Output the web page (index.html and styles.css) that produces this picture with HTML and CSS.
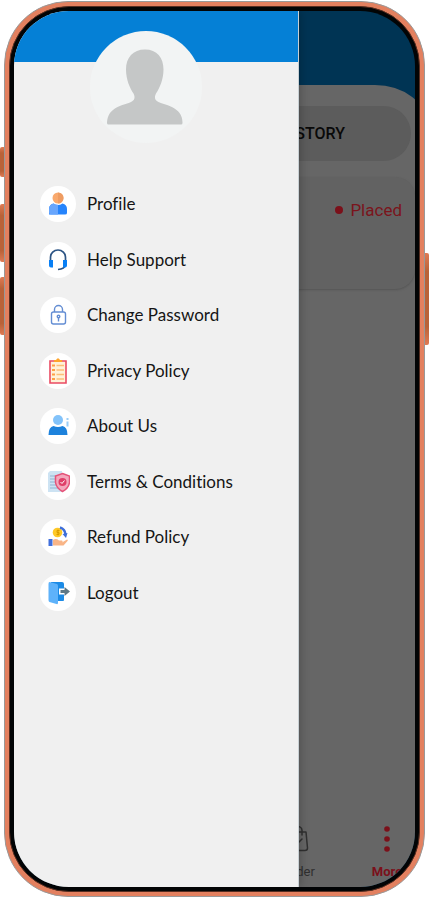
FILE: index.html
```html
<!DOCTYPE html>
<html lang="en">
<head>
<meta charset="utf-8">
<meta name="viewport" content="width=device-width, initial-scale=1">
<title>Account menu</title>
<link rel="stylesheet" href="styles.css">
</head>
<body>
<div class="phone">
  <span class="key key-mute"></span>
  <span class="key key-up"></span>
  <span class="key key-down"></span>
  <span class="key key-power"></span>
  <div class="bezel">
    <div class="screen">
      <main class="app">
        <header class="app-header"></header>
        <section class="sheet">
          <button class="history" type="button">HISTORY</button>
          <article class="order"><span class="dot"></span>Placed</article>
        </section>
        <nav class="tabs">
          <a class="tab" href="#order">
            <svg width="22" height="28" viewBox="0 0 22 28" fill="none" stroke="currentColor" stroke-width="1.5" stroke-linecap="round" stroke-linejoin="round"><path d="M3 7H18L19.500 23Q19.500 25.500 17 25.500H3Q.8 25.500 1 23L2 8Q2 7 3 7ZM5 10V5.500a4.500 4 0 0 1 9 0V10M6 16l3 3 5-5"/></svg>
            Order
          </a>
          <a class="tab tab-active" href="#more">
            <svg width="22" height="28" viewBox="0 0 22 28" fill="currentColor"><circle cx="11" cy="4" r="2.800"/><circle cx="11" cy="14" r="2.800"/><circle cx="11" cy="24" r="2.800"/></svg>
            More
          </a>
        </nav>
      </main>
      <aside class="drawer">
        <div class="banner"></div>
        <svg class="avatar" viewBox="0 0 112 112" role="img" aria-label="Profile picture"><circle cx="56" cy="56" r="56" fill="#f2f4f4"/><path fill="#c5c7c7" d="M55 18.500c12 0 18.500 8 18.500 20 0 10-4 19-7.500 24-2 4-1 7 2.500 8.500 6 2.500 13 3.500 18 8 4.500 3.500 6 8 6 13q0 1.500-1.500 1.500H18.500q-1.500 0-1.500-1.500c0-5 2-10 6-13 5-4.500 12-5.500 18-8 3.500-1.500 4.500-4.500 2.500-8.500-3.500-5-7.500-14-7.500-24 0-12 7-20 19-20Z"/></svg>
        <nav class="menu">
          <a class="item" href="#profile"><span class="icon"><svg viewBox="0 0 24 24"><circle cx="12" cy="6" r="5.500" fill="#f9a96d"/><path d="M12 .5a5.500 5.500 0 0 1 0 11Z" fill="#ee9c62"/><path d="M3 22.500V17q0-4.500 4.500-5.500 4.500 3 9 0Q21 12.500 21 17v4q0 1.500-2 1.500Z" fill="#2684fc"/><path d="M12 12.800v9.700H5q-2 0-2-2V17q0-4.500 4.500-5.500 2 1.300 4.500 1.300Z" fill="#68a6fd"/></svg></span>Profile</a>
          <a class="item" href="#support"><span class="icon"><svg viewBox="0 0 24 24" fill="none"><path d="M4.500 12V9.500a7.500 7.500 0 0 1 15 0V12" stroke="#2c5484" stroke-width="1.700"/><path d="M19.500 17q-1 4-7.500 4.500" stroke="#2c5484" stroke-width="1.700"/><path d="M3 12h4v7.500H5q-2 0-2-2ZM21 12h-4v7.500H19q2 0 2-2Z" fill="#087ff5"/></svg></span>Help Support</a>
          <a class="item" href="#password"><span class="icon"><svg viewBox="0 0 24 24" fill="none" stroke="#638dd3" stroke-width="1.400"><rect x="5.500" y="9" width="14" height="12" rx="2"/><path d="M8.500 9V6.500a4 4 0 0 1 8 0V9M12.500 14.500v4"/><circle cx="12.500" cy="13.500" r="1.300"/></svg></span>Change Password</a>
          <a class="item" href="#privacy"><span class="icon"><svg class="icon-tall" viewBox="0 0 24 28" fill="none"><path d="M4 4h16v22H4Z" fill="#fff2d9" stroke="#ea4b63" stroke-width="1.600"/><path d="M8 5V3h2q2-3.500 4 0h2v2Z" fill="#ffa52b"/><path d="M6 8.500h3M6 13h3M6 17.500h3M6 22h3" stroke="#ff9f45" stroke-width="2.200"/><path d="M10.500 8.500h7.500M10.500 13h7.500M10.500 17.500h7.500M10.500 22h7.500" stroke="#fdbf77" stroke-width="1.600"/></svg></span>Privacy Policy</a>
          <a class="item" href="#about"><span class="icon"><svg viewBox="0 0 24 24"><circle cx="12" cy="6" r="5" fill="#83c3fa"/><path d="M2.500 21q0-8 5-9 4.500 2 9 0 5 1 5 9Z" fill="#1d82dc"/><path d="M20.500 4h2v2h-2ZM20.500 7.500h2v5h-2Z" fill="#9bcef7"/></svg></span>About Us</a>
          <a class="item" href="#terms"><span class="icon"><svg viewBox="0 0 24 24" fill="none"><path d="M4 1h12v21H2V3Z" fill="#cde3f3"/><path d="M4 6h11M4 9h11M4 12h9M4 15h9M4 18h9" stroke="#91b5d2"/><path d="M16.500 3.500 23.500 6v6.500q-1 6-7 9-6-3-7-9V6Z" fill="#f3a8bd" stroke="#e55379" stroke-width="1.500"/><circle cx="16.500" cy="12" r="4" fill="#df3f69"/><path d="m14.500 12 1.500 1.500 2.500-3" stroke="#fff"/></svg></span>Terms &amp; Conditions</a>
          <a class="item" href="#refund"><span class="icon"><svg viewBox="0 0 24 24" fill="none"><circle cx="11.500" cy="7.500" r="4.800" fill="#ffc928"/><path d="M12 4.500v6M13.500 5.500h-2.500v2h2v2h-2.500" stroke="#d99d00"/><path d="M14 2.500q5 1.500 5.500 7" stroke="#3f6fd8" stroke-width="2.500"/><path d="m16.500 9 3.500 4 1.500-5Z" fill="#3f6fd8"/><path d="M7 15q3-2 6 .5h3q1.500 1 0 2l5-3q1.500 0 .5 1.500l-4 4.500H7Z" fill="#f9b587"/><path d="M2.500 14h4v7h-4Z" fill="#416fdc"/></svg></span>Refund Policy</a>
          <a class="item" href="#logout"><span class="icon"><svg viewBox="0 0 24 24"><path d="M5 1h11q2 0 2 2v16q0 1-1 1H5Z" fill="#1c8be6"/><path d="m3.500 1 7.500 2q1 .5 1 2v17q0 1.500-1.500 1L3.500 21Q2.500 20.500 2.500 19V3q0-2 1-2Z" fill="#5eb2fa"/><path d="M13 7.500h6v6h-6Z" fill="#fff"/><path d="M14.500 9H18.500V6L24 10.500 18.500 15v-3h-4Z" fill="#5f7885"/></svg></span>Logout</a>
        </nav>
      </aside>
    </div>
  </div>
</div>
</body>
</html>
```
FILE: styles.css
```css
* {
  box-sizing: border-box;
}

body {
  margin: 0;
  min-height: 100vh;
  display: flex;
  padding: 1px 5px 1px 4px;
  background: #fff;
  font-family: Roboto, "Liberation Sans", sans-serif;
}

a {
  color: inherit;
  text-decoration: none;
}

.phone {
  position: relative;
  flex: 1;
  display: flex;
  padding: 4px;
  border: 1px solid #999;
  border-radius: 64px;
  background: #e3805f;
}

.bezel {
  flex: 1;
  display: flex;
  padding: 4px;
  border: 1px solid #552d20;
  border-radius: 60px;
  background: #020405;
}

.screen {
  position: relative;
  flex: 1;
  display: flex;
  overflow: hidden;
  border-radius: 55px;
  background: #fff;
}

.key {
  position: absolute;
  left: -5px;
  width: 4px;
  border-radius: 2px 0 0 2px;
  background: linear-gradient(#df7b55, #b96238 20%, #b96238 80%, #df7b55);
}

.key-mute {
  top: 145px;
  height: 30px;
}

.key-up {
  top: 202px;
  height: 58px;
}

.key-down {
  top: 275px;
  height: 58px;
}

.key-power {
  top: 251px;
  right: -5px;
  left: auto;
  height: 92px;
  border-radius: 0 2px 2px 0;
}

.app {
  flex: 1;
  display: flex;
  flex-direction: column;
  background: #003454;
}

.app-header {
  height: 74px;
}

.sheet {
  flex: 1;
  display: flex;
  flex-direction: column;
  gap: 16px;
  margin-right: -12px;
  padding: 21px 12px 0 4px;
  border-radius: 0 52px 0 0 / 0 40px 0 0;
  background: #666;
}

.history {
  height: 55px;
  margin-right: 4px;
  padding: 0 66px 0 0;
  border: 0;
  border-radius: 28px;
  background: #5c5c5c;
  color: #090909;
  font: 500 16px/24px Roboto, sans-serif;
  text-align: right;
}

.order {
  display: flex;
  justify-content: flex-end;
  align-items: flex-start;
  gap: 7px;
  height: 112px;
  padding: 21px 13px 0 0;
  border-radius: 20px;
  background: #626262;
  box-shadow: 0 1px 2px #555;
  color: #7b141c;
  font-size: 17px;
  line-height: 24px;
}

.dot {
  width: 8px;
  height: 8px;
  margin-top: 8px;
  border-radius: 50%;
  background: #7b101a;
}

.tabs {
  display: flex;
  justify-content: flex-end;
  gap: 32px;
  padding-bottom: 6px;
  background: #666;
}

.tab {
  width: 56px;
  display: flex;
  flex-direction: column;
  align-items: center;
  gap: 10px;
  color: #303030;
  font-size: 13px;
  line-height: 18px;
}

.tab-active {
  color: #7b101a;
  font-weight: 700;
}

.drawer {
  position: absolute;
  inset: 0 auto 0 0;
  width: 71%;
  display: flex;
  flex-direction: column;
  background: #f0f0f0;
  border-right: 1px solid #c8d0d4;
  box-shadow: 0 0 10px rgba(0, 0, 0, 0.3);
}

.banner {
  height: 51px;
  background: #0580d6;
}

.avatar {
  width: 112px;
  height: 112px;
  margin: -31px auto 0;
  transform: translateX(-10px);
}

.menu {
  display: flex;
  flex-direction: column;
  justify-content: space-between;
  height: 425px;
  margin: 43px 26px 0;
}

.item {
  display: flex;
  align-items: center;
  gap: 11px;
  height: 36px;
  color: #151515;
  font: 17px/24px Lato, sans-serif;
  font-variant-ligatures: none;
}

.icon {
  width: 36px;
  height: 36px;
  display: grid;
  place-items: center;
  border-radius: 50%;
  background: #fff;
}

.icon svg {
  width: 24px;
  height: 24px;
}

.icon .icon-tall {
  height: 28px;
}
```
